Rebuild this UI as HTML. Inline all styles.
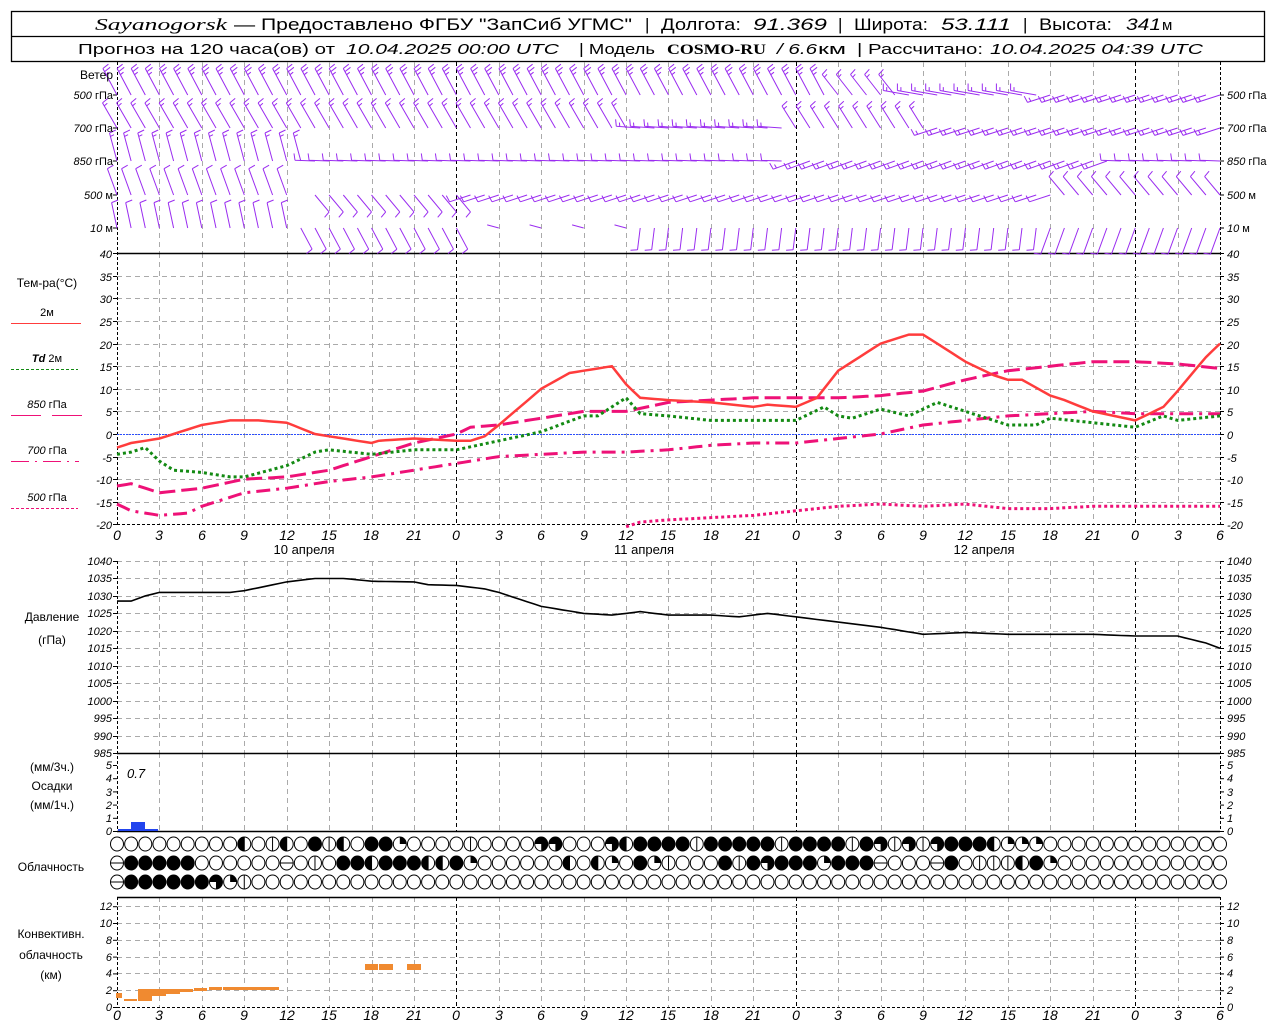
<!DOCTYPE html>
<html><head><meta charset="utf-8"><style>
html,body{margin:0;padding:0;background:#fff;width:1280px;height:1024px;overflow:hidden}
svg{display:block}
text{font-family:"Liberation Sans",sans-serif;fill:#000}
.i{font-style:italic}
.t{font-size:11px;font-style:italic}
.l{font-size:11px}
.h{font-size:14px;font-style:italic}
</style></head><body>
<svg id="s" width="1280" height="1024" xmlns="http://www.w3.org/2000/svg">
<rect x="11.5" y="11.5" width="1253" height="50" fill="#fff" stroke="#000" stroke-width="1.3"/>
<line x1="11" y1="36.5" x2="1265" y2="36.5" stroke="#000" stroke-width="1.3"/>
<g font-size="17">
<text x="95" y="30" textLength="132" lengthAdjust="spacingAndGlyphs" style="font-family:'Liberation Serif',serif;font-style:italic">Sayanogorsk</text>
<text x="234" y="30" textLength="398" lengthAdjust="spacingAndGlyphs">— Предоставлено ФГБУ "ЗапСиб УГМС"</text>
<text x="645" y="30">|</text>
<text x="661" y="30" textLength="80" lengthAdjust="spacingAndGlyphs">Долгота:</text>
<text x="753" y="30" class="i" textLength="74" lengthAdjust="spacingAndGlyphs">91.369</text>
<text x="838" y="30">|</text>
<text x="854" y="30" textLength="74" lengthAdjust="spacingAndGlyphs">Широта:</text>
<text x="941" y="30" class="i" textLength="70" lengthAdjust="spacingAndGlyphs">53.111</text>
<text x="1023" y="30">|</text>
<text x="1039" y="30" textLength="73" lengthAdjust="spacingAndGlyphs">Высота:</text>
<text x="1126" y="30" class="i" textLength="35" lengthAdjust="spacingAndGlyphs">341</text>
<text x="1162" y="30" font-size="15">м</text>
</g>
<g font-size="15">
<text x="78" y="54" textLength="257" lengthAdjust="spacingAndGlyphs">Прогноз на 120 часа(ов) от</text>
<text x="346" y="54" class="i" textLength="213" lengthAdjust="spacingAndGlyphs">10.04.2025 00:00 UTC</text>
<text x="579" y="54" textLength="76" lengthAdjust="spacingAndGlyphs">| Модель</text>
<text x="667" y="54" textLength="99" lengthAdjust="spacingAndGlyphs" style="font-family:'Liberation Serif',serif;font-weight:bold">COSMO-RU</text>
<text x="777" y="54" class="i" textLength="40" lengthAdjust="spacingAndGlyphs">/ 6.6</text>
<text x="818" y="54" textLength="28" lengthAdjust="spacingAndGlyphs">км</text>
<text x="857" y="54" textLength="126" lengthAdjust="spacingAndGlyphs">| Рассчитано:</text>
<text x="990" y="54" class="i" textLength="213" lengthAdjust="spacingAndGlyphs">10.04.2025 04:39 UTC</text>
</g>
<g id="grid"></g>
<g id="data"></g>
<g class="l" text-anchor="end">
<text x="113" y="79" font-size="12">Ветер</text>
<text x="113" y="99"><tspan class="i">500</tspan> гПа</text>
<text x="113" y="132"><tspan class="i">700</tspan> гПа</text>
<text x="113" y="165"><tspan class="i">850</tspan> гПа</text>
<text x="113" y="199"><tspan class="i">500</tspan>  м</text>
<text x="113" y="232"><tspan class="i">10</tspan>   м</text>
</g>
<g font-size="11">
<text x="1227" y="99"><tspan class="i">500</tspan> гПа</text>
<text x="1227" y="132"><tspan class="i">700</tspan> гПа</text>
<text x="1227" y="165"><tspan class="i">850</tspan> гПа</text>
<text x="1227" y="199"><tspan class="i">500</tspan>  м</text>
<text x="1227" y="232"><tspan class="i">10</tspan>   м</text>
</g>
<g class="l" text-anchor="middle">
<text x="47" y="287" font-size="12">Тем-ра(°C)</text>
<text x="47" y="316">2м</text>
<text x="47" y="362"><tspan class="i" font-weight="bold">Td</tspan>  2м</text>
<text x="47" y="408"><tspan class="i">850</tspan> гПа</text>
<text x="47" y="454"><tspan class="i">700</tspan> гПа</text>
<text x="47" y="501"><tspan class="i">500</tspan> гПа</text>
<text x="52" y="621" font-size="12">Давление</text>
<text x="52" y="644" font-size="12">(гПа)</text>
<text x="52" y="771" font-size="12">(мм/3ч.)</text>
<text x="52" y="790" font-size="12">Осадки</text>
<text x="52" y="809" font-size="12">(мм/1ч.)</text>
<text x="51" y="871" font-size="12">Облачность</text>
<text x="51" y="938" font-size="12">Конвективн.</text>
<text x="51" y="959" font-size="12">облачность</text>
<text x="51" y="979" font-size="12">(км)</text>
</g>
<line x1="11" y1="323.5" x2="81" y2="323.5" stroke="#ff3c3c" stroke-width="1"/>
<line x1="11" y1="369.5" x2="78" y2="369.5" stroke="#138a13" stroke-width="1" stroke-dasharray="3,2"/>
<line x1="11" y1="415.5" x2="41" y2="415.5" stroke="#ee1177" stroke-width="1"/>
<line x1="52" y1="415.5" x2="82" y2="415.5" stroke="#ee1177" stroke-width="1"/>
<line x1="11" y1="461.5" x2="79" y2="461.5" stroke="#ee1177" stroke-width="1" stroke-dasharray="18,6,2,6"/>
<line x1="11" y1="508.5" x2="78" y2="508.5" stroke="#ee1177" stroke-width="1" stroke-dasharray="3,2"/>
<text x="127" y="778" class="i" font-size="13">0.7</text>
<g class="t" text-anchor="end">
<text x="112" y="258">40</text><text x="112" y="281">35</text><text x="112" y="303">30</text><text x="112" y="326">25</text><text x="112" y="349">20</text><text x="112" y="371">15</text><text x="112" y="394">10</text><text x="112" y="416">5</text><text x="112" y="439">0</text><text x="112" y="462">-5</text><text x="112" y="484">-10</text><text x="112" y="507">-15</text><text x="112" y="529">-20</text>
<text x="112" y="565">1040</text><text x="112" y="582">1035</text><text x="112" y="600">1030</text><text x="112" y="617">1025</text><text x="112" y="635">1020</text><text x="112" y="652">1015</text><text x="112" y="670">1010</text><text x="112" y="687">1005</text><text x="112" y="705">1000</text><text x="112" y="722">995</text><text x="112" y="740">990</text><text x="112" y="757">985</text>
<text x="112" y="769">5</text><text x="112" y="782">4</text><text x="112" y="796">3</text><text x="112" y="809">2</text><text x="112" y="822">1</text><text x="112" y="835">0</text>
<text x="112" y="910">12</text><text x="112" y="927">10</text><text x="112" y="944">8</text><text x="112" y="961">6</text><text x="112" y="977">4</text><text x="112" y="994">2</text><text x="112" y="1011">0</text>
</g>
<g class="t">
<text x="1227" y="258">40</text><text x="1227" y="281">35</text><text x="1227" y="303">30</text><text x="1227" y="326">25</text><text x="1227" y="349">20</text><text x="1227" y="371">15</text><text x="1227" y="394">10</text><text x="1227" y="416">5</text><text x="1227" y="439">0</text><text x="1227" y="462">-5</text><text x="1227" y="484">-10</text><text x="1227" y="507">-15</text><text x="1227" y="529">-20</text>
<text x="1227" y="565">1040</text><text x="1227" y="582">1035</text><text x="1227" y="600">1030</text><text x="1227" y="617">1025</text><text x="1227" y="635">1020</text><text x="1227" y="652">1015</text><text x="1227" y="670">1010</text><text x="1227" y="687">1005</text><text x="1227" y="705">1000</text><text x="1227" y="722">995</text><text x="1227" y="740">990</text><text x="1227" y="757">985</text>
<text x="1227" y="769">5</text><text x="1227" y="782">4</text><text x="1227" y="796">3</text><text x="1227" y="809">2</text><text x="1227" y="822">1</text><text x="1227" y="835">0</text>
<text x="1227" y="910">12</text><text x="1227" y="927">10</text><text x="1227" y="944">8</text><text x="1227" y="961">6</text><text x="1227" y="977">4</text><text x="1227" y="994">2</text><text x="1227" y="1011">0</text>
</g>
<g class="h" text-anchor="middle">
<text x="117" y="540">0</text><text x="159" y="540">3</text><text x="202" y="540">6</text><text x="244" y="540">9</text><text x="287" y="540">12</text><text x="329" y="540">15</text><text x="371" y="540">18</text><text x="414" y="540">21</text><text x="456" y="540">0</text><text x="499" y="540">3</text><text x="541" y="540">6</text><text x="584" y="540">9</text><text x="626" y="540">12</text><text x="668" y="540">15</text><text x="711" y="540">18</text><text x="753" y="540">21</text><text x="796" y="540">0</text><text x="838" y="540">3</text><text x="881" y="540">6</text><text x="923" y="540">9</text><text x="965" y="540">12</text><text x="1008" y="540">15</text><text x="1050" y="540">18</text><text x="1093" y="540">21</text><text x="1135" y="540">0</text><text x="1178" y="540">3</text><text x="1220" y="540">6</text>
<text x="117" y="1020">0</text><text x="159" y="1020">3</text><text x="202" y="1020">6</text><text x="244" y="1020">9</text><text x="287" y="1020">12</text><text x="329" y="1020">15</text><text x="371" y="1020">18</text><text x="414" y="1020">21</text><text x="456" y="1020">0</text><text x="499" y="1020">3</text><text x="541" y="1020">6</text><text x="584" y="1020">9</text><text x="626" y="1020">12</text><text x="668" y="1020">15</text><text x="711" y="1020">18</text><text x="753" y="1020">21</text><text x="796" y="1020">0</text><text x="838" y="1020">3</text><text x="881" y="1020">6</text><text x="923" y="1020">9</text><text x="965" y="1020">12</text><text x="1008" y="1020">15</text><text x="1050" y="1020">18</text><text x="1093" y="1020">21</text><text x="1135" y="1020">0</text><text x="1178" y="1020">3</text><text x="1220" y="1020">6</text>
</g>
<g font-size="13" text-anchor="middle">
<text x="304" y="554">10 апреля</text>
<text x="644" y="554">11 апреля</text>
<text x="984" y="554">12 апреля</text>
</g>
</svg>
<script>
(function(){
var NS="http://www.w3.org/2000/svg";
var G=document.getElementById("grid"),D=document.getElementById("data");
function el(p,t,a){var e=document.createElementNS(NS,t);for(var k in a)e.setAttribute(k,a[k]);p.appendChild(e);return e;}
function X(h){return 117+h*14.141;}
function Ty(t){return 434-t*4.52;}
function Py(p){return 561+(1040-p)*3.49;}
function ln(p,x1,y1,x2,y2,a){a=a||{};a.x1=x1;a.y1=y1;a.x2=x2;a.y2=y2;return el(p,"line",a);}
var gray={stroke:"#aaa","stroke-width":1,"stroke-dasharray":"5,4"};
var panels=[[62,253],[253,525],[561,753],[753,831],[897,1007]];
panels.forEach(function(pn){
 for(var h=3;h<78;h+=3){
  var x=Math.round(X(h))+0.5;
  if(h%24==0) ln(G,x,pn[0],x,pn[1],{stroke:"#000","stroke-width":1,"stroke-dasharray":"4,3"});
  else ln(G,x,pn[0],x,pn[1],gray);
 }
});
for(var t=35;t>=-15;t-=5){var y=Math.round(Ty(t))+0.5;ln(G,117,y,1220,y,gray);}
for(var p=1040;p>985;p-=5){var y=Math.round(Py(p))+0.5;ln(G,117,y,1220,y,gray);}
for(var k=1;k<=6;k++){var y=Math.round(1007-k*16.8)+0.5;ln(G,117,y,1220,y,gray);}
var blk={stroke:"#000","stroke-width":1.5};
ln(G,117,253.5,1220,253.5,blk);
ln(G,117,524.5,1220,524.5,{stroke:"#000","stroke-width":1,"stroke-dasharray":"3,2"});
ln(G,117,753.5,1220,753.5,blk);
ln(G,117,831.5,1220,831.5,blk);
ln(G,117,897.5,1220,897.5,blk);
ln(G,117,1007.5,1220,1007.5,{stroke:"#000","stroke-width":1,"stroke-dasharray":"3,2"});
[[62,525],[561,831],[897,1007]].forEach(function(r){
 ln(G,117.5,r[0],117.5,r[1],{stroke:"#000","stroke-width":1,"stroke-dasharray":"3,2"});
 ln(G,1220.5,r[0],1220.5,r[1],{stroke:"#000","stroke-width":1,"stroke-dasharray":"3,2"});
});
function ticks(ys){ys.forEach(function(y){ln(G,113,y,117,y,{stroke:"#000"});ln(G,1220,y,1224,y,{stroke:"#000"});});}
var ty=[];for(var t=40;t>=-20;t-=5)ty.push(Math.round(Ty(t))+0.5);ticks(ty);
var py=[];for(var p=1040;p>=985;p-=5)py.push(Math.round(Py(p))+0.5);ticks(py);
var ry=[];for(var k=0;k<=5;k++)ry.push(831.5-k*13.2);ticks(ry);
var cy=[];for(var k=0;k<=6;k++)cy.push(1007.5-k*16.8);ticks(cy);
ticks([95,128,161,195,228]);
ln(G,117,434.5,1220,434.5,{stroke:"#2a4dff","stroke-width":1,"stroke-dasharray":"2,1"});
function interp(k,h){for(var i=0;i<k.length-1;i++){if(h>=k[i][0]&&h<=k[i+1][0]){var f=(h-k[i][0])/(k[i+1][0]-k[i][0]);return k[i][1]+f*(k[i+1][1]-k[i][1]);}}return k[k.length-1][1];}
function curve(k,fy,a,h0){var d="";h0=h0||0;for(var h=h0;h<=78.001;h+=0.5){d+=(h==h0?"M":"L")+X(h).toFixed(1)+","+fy(interp(k,h)).toFixed(1);}a.d=d;a.fill="none";el(D,"path",a);}
var T2=[[0,-3],[1,-2],[3,-1],[4.5,0.5],[6,2],[8,3],[10,3],[12,2.5],[14,0],[15,-0.5],[17,-1.5],[18,-2],[18.5,-1.5],[21,-1],[24,-1.5],[25,-1.5],[26,-0.5],[27,2],[30,10],[32,13.5],[34,14.5],[35,15],[36,11],[37,8],[39,7.5],[42,7],[45,6],[46,6.5],[48,6],[49.5,8],[51,14],[54,20],[56,22],[57,22],[60,16],[62,13],[63,12],[64,12],[66,8.5],[67,7.5],[69,5],[72,3],[74,6],[75,9.5],[77,17],[78,20]];
var TD=[[0,-4.5],[1,-4],[2,-3],[3,-6],[4,-8],[6,-8.5],[8,-9.5],[9,-9.5],[12,-7],[14,-4],[15,-3.5],[18,-4.5],[21,-3.5],[24,-3.5],[27,-1.5],[30,0.5],[33,4],[34,4],[36,8],[37,4.5],[39,4],[42,3],[45,3],[48,3],[50,6],[51,4],[52,3.5],[54,5.5],[56,4],[58,7],[60,5],[61,4],[63,2],[65,2],[66,3.5],[69,2.5],[72,1.5],[74,4],[75,3],[78,4]];
var T85=[[0,-11.5],[1,-11],[2,-12],[3,-13],[6,-12],[9,-10],[12,-9.5],[15,-8],[18,-5],[21,-2],[24,0],[25,1.5],[27,2],[30,3.5],[33,5],[36,5],[39,7],[42,7.5],[45,8],[48,8],[51,8],[54,8.5],[57,9.5],[60,12],[63,14],[66,15],[69,16],[72,16],[75,15.5],[78,14.5]];
var T70=[[0,-15.5],[1,-17],[3,-18],[5,-17.5],[6,-16],[9,-13],[12,-12],[15,-10.5],[18,-9.5],[21,-8],[24,-6.5],[27,-5],[30,-4.5],[33,-4],[36,-4],[39,-3.5],[42,-2.5],[45,-2],[48,-2],[51,-1],[54,0],[57,2],[60,3],[63,4],[66,4.5],[69,5],[72,4.5],[78,4.5]];
var T50=[[36,-20.5],[37,-19.5],[39,-19],[42,-18.5],[45,-18],[48,-17],[51,-16],[54,-15.5],[57,-16],[60,-15.5],[63,-16.5],[66,-16.5],[69,-16],[72,-16],[75,-16],[78,-16]];
curve(T50,Ty,{stroke:"#ee1177","stroke-width":3,"stroke-dasharray":"3,3"},36);
curve(T70,Ty,{stroke:"#ee1177","stroke-width":3,"stroke-dasharray":"14,6,3,6"});
curve(T85,Ty,{stroke:"#ee1177","stroke-width":3,"stroke-dasharray":"16,6"});
curve(TD,Ty,{stroke:"#138a13","stroke-width":3,"stroke-dasharray":"3,3"});
curve(T2,Ty,{stroke:"#ff3c3c","stroke-width":2.5});
var PR=[[0,1028.5],[1,1028.5],[2,1030],[3,1031],[6,1031],[8,1031],[9,1031.5],[12,1034],[14,1035],[16,1035],[18,1034.2],[21,1034],[22,1033.2],[24,1033],[26,1032],[27,1031],[30,1027],[33,1025],[35,1024.5],[37,1025.5],[39,1024.5],[42,1024.5],[44,1024],[46,1025],[48,1024],[51,1022.5],[54,1021],[57,1019],[60,1019.5],[63,1019],[66,1019],[69,1019],[72,1018.5],[75,1018.5],[77,1016.5],[78,1015]];
curve(PR,Py,{stroke:"#000","stroke-width":1.6});
el(D,"rect",{x:118,y:829,width:13,height:2,fill:"#2244ee"});
el(D,"rect",{x:131,y:822,width:14,height:9,fill:"#2244ee"});
el(D,"rect",{x:145,y:829,width:13,height:2,fill:"#2244ee"});
var OR="#f08a30";
[[116,993,6,5],[124,999,13,2],[138,989,14,12],[152,989,14,7],[166,989,14,5],[180,989,13,3],[194,988,13,3],[209,987,13,3],[223,987,56,3],[365,964,13,6],[379,964,14,6],[407,964,14,6]].forEach(function(r){el(D,"rect",{x:r[0],y:r[1],width:r[2],height:r[3],fill:OR});});
var rows=[
"ooooooooo"+"hodhofdhoffqoooodooooQQoooQh"+"ffffdfffffdffffdfQdQdQfffhqqq",
"tfffff"+"oooooo"+"todoffhfffhhfq"+"oooooo"+"hohqo"+"fqdooofdfQfffqffftoootfodddhfq",
"tffffffQqd"];
var rowY=[844,863,882];
rows.forEach(function(s,ri){
 s=(s+"o".repeat(80)).slice(0,79);
 for(var h=0;h<79;h++){
  var cx=X(h),cy=rowY[ri],r=6.5,c=s[h];
  var g=el(D,"g",{});
  el(g,"ellipse",{cx:cx,cy:cy,rx:r,ry:r+0.5,fill:c=="f"?"#000":"#fff",stroke:"#000","stroke-width":1});
  if(c=="h")el(g,"path",{d:"M"+cx+","+(cy-r-0.5)+"A"+r+","+(r+0.5)+" 0 0 0 "+cx+","+(cy+r+0.5)+"Z",fill:"#000"});
  if(c=="d"||c=="h")ln(g,cx,cy-r,cx,cy+r,{stroke:"#000"});
  if(c=="t")ln(g,cx-r,cy,cx+r,cy,{stroke:"#000"});
  if(c=="q")el(g,"path",{d:"M"+cx+","+cy+"L"+cx+","+(cy-r-0.5)+"A"+r+","+(r+0.5)+" 0 0 1 "+(cx+r)+","+cy+"Z",fill:"#000"});
  if(c=="Q")el(g,"path",{d:"M"+cx+","+cy+"L"+(cx-r)+","+cy+"A"+r+","+(r+0.5)+" 0 1 1 "+cx+","+(cy+r+0.5)+"Z",fill:"#000"});
 }
});
var WB=el(D,"g",{stroke:"#9a2cf0","stroke-width":1,fill:"none"});
function ang(k,h){for(var i=0;i<k.length;i++){if(h<k[i][0])return k[i];}return k[k.length-1];}
var W=[
 [95,[[51,242,30,3],[56,232,26,2],[66,190,26,2],[79,162,24,2]]],
 [128,[[37,240,29,2],[48,184,24,2],[58,238,26,2],[79,162,24,2]]],
 [161,[[14,255,29,2],[48,182,20,1],[71,160,24,2],[79,182,20,1]]],
 [195,[[13,250,28,1],[14,270,30,0],[25,50,22,1],[67,162,22,1],[79,230,24,1]]],
 [228,[[13,258,26,1],[25,62,24,1],[37,195,12,0],[66,97,22,1],[79,110,28,1]]]
];
W.forEach(function(rw){
 var y0=rw[0];
 for(var h=0;h<=78;h++){
  var k=ang(rw[1],h);
  if(y0==195&&h==13)continue;
  if(k[3]==0&&y0==228&&h%3!=0)continue;
  var a=k[1]*Math.PI/180,L=k[2],n=k[3];
  var x0=X(h),tx=x0+L*Math.cos(a),ty=y0+L*Math.sin(a);
  var d="M"+x0.toFixed(1)+","+y0+"L"+tx.toFixed(1)+","+ty.toFixed(1);
  var fa=a+80*Math.PI/180;
  for(var j=0;j<n;j++){
   var px=tx-j*3.5*Math.cos(a),pyy=ty-j*3.5*Math.sin(a);
   var fl=(j==n-1&&n>1)?4:7;
   d+="M"+px.toFixed(1)+","+pyy.toFixed(1)+"l"+(fl*Math.cos(fa)).toFixed(1)+","+(fl*Math.sin(fa)).toFixed(1);
  }
  el(WB,"path",{d:d});
 }
});
})();
</script>
</body></html>
